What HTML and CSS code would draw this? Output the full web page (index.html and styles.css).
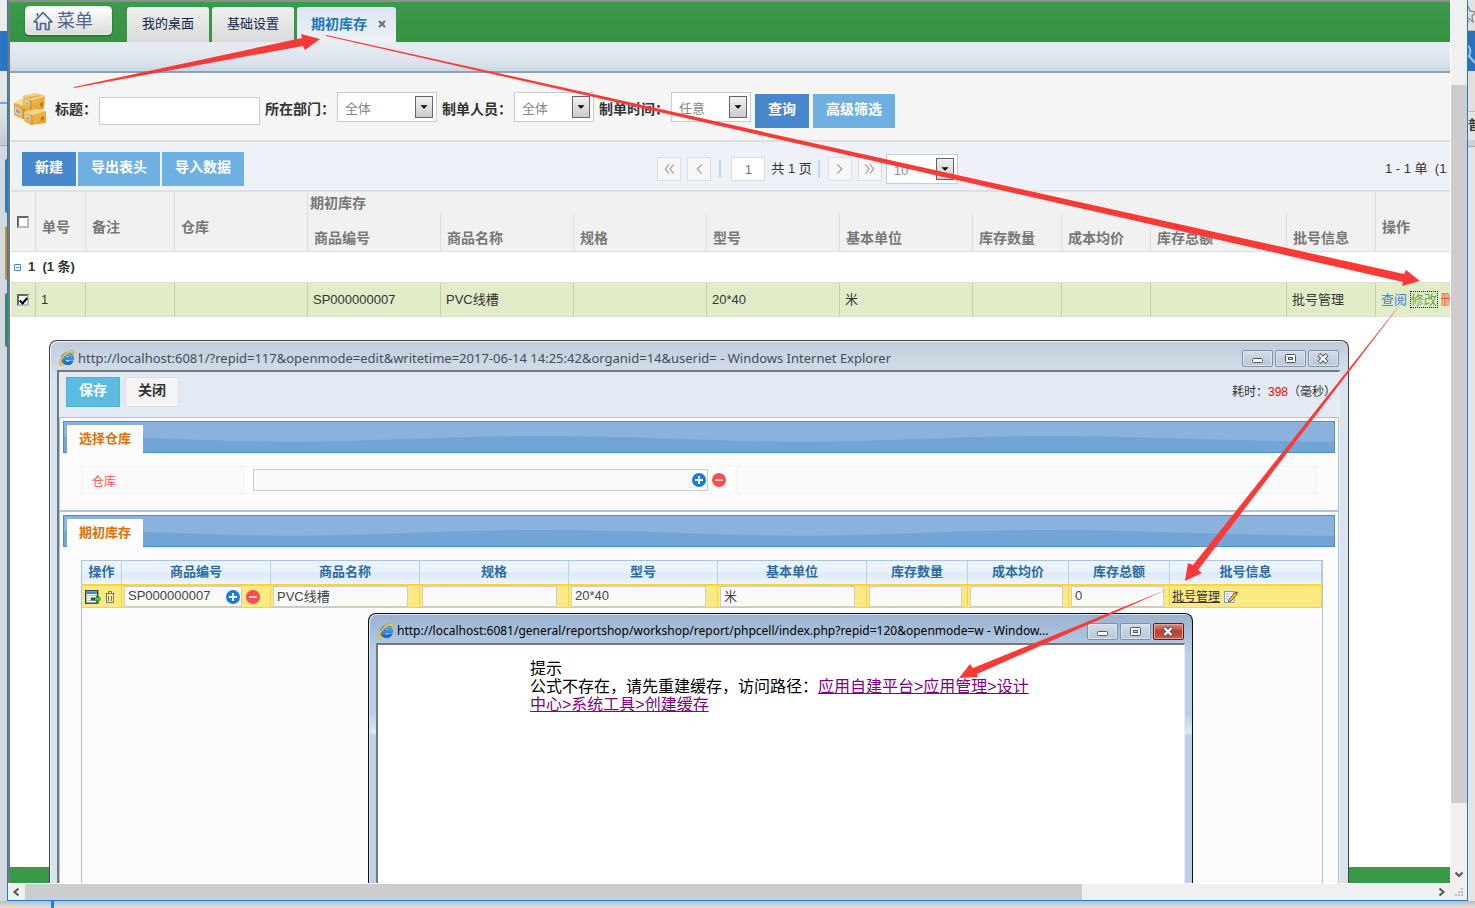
FILE: index.html
```html
<!DOCTYPE html>
<html lang="zh-CN">
<head>
<meta charset="utf-8">
<title>期初库存</title>
<link rel="stylesheet" href="styles.css">
</head>
<body>
<svg class="defs" width="0" height="0" aria-hidden="true">
  <defs>
    <linearGradient id="ieg" x1="0" y1="0" x2="0" y2="1"><stop offset="0" stop-color="#4cc6ff"/><stop offset="1" stop-color="#0a62c4"/></linearGradient>
    <linearGradient id="boxf" x1="0" y1="0" x2="1" y2="1"><stop offset="0" stop-color="#f0c468"/><stop offset="1" stop-color="#e39f2c"/></linearGradient>
    <symbol id="ie" viewBox="0 0 16 16">
      <path d="M14.600 9.600H6.200c.2 1.500 1.100 2.300 2.500 2.300.9 0 1.600-.3 2-1h3.500c-.8 2.600-2.900 3.900-5.600 3.900-3.600 0-6.200-2.400-6.200-6 0-3.600 2.600-6.200 6.200-6.200 3.900 0 6.200 2.600 6 7zM10.900 7.300C10.700 6.100 9.900 5.500 8.600 5.500S6.500 6.100 6.200 7.300z" fill="url(#ieg)" stroke="#0a58ad" stroke-width=".5"/>
      <path d="M13.900 4.500C14.600 2.600 14.500 1 12.600 1.100 8.500 1.300 1.500 8.300.9 13c-.2 2.300 1.700 2.200 3.600 1" fill="none" stroke="#c98a12" stroke-width="2"/>
      <path d="M13.900 4.500C14.600 2.600 14.500 1 12.600 1.100 8.500 1.300 1.500 8.300.9 13c-.2 2.300 1.700 2.200 3.600 1" fill="none" stroke="#ffd94a" stroke-width="1.100"/>
    </symbol>
    <symbol id="plus" viewBox="0 0 14 14"><circle cx="7" cy="7" r="7" fill="#1c7be0"/><path d="M7 3v8M3 7h8" stroke="#fff" stroke-width="1.800"/></symbol>
    <symbol id="minus" viewBox="0 0 14 14"><circle cx="7" cy="7" r="7" fill="#fd4d4d"/><path d="M3 7h8" stroke="#fff" stroke-width="1.500"/></symbol>
    <symbol id="wave" viewBox="0 0 1272 32" preserveAspectRatio="none"><path d="M0 16C80 15 150 21 227 21S390 15 482 15s170 6 255 6 165-6 255-6 190 6 280 6V32H0z" fill="#72a4d6"/></symbol>
    <symbol id="drop" viewBox="0 0 18 22"><path d="M5 9h8L9 13z" fill="#000"/></symbol>
    <symbol id="w-min" viewBox="0 0 31 17"><rect x="10.500" y="8.500" width="10" height="4" rx="1" fill="#fff" stroke="#4d5868"/></symbol>
    <symbol id="w-max" viewBox="0 0 31 17"><rect x="10.500" y="4.500" width="10" height="8" rx="1" fill="#fff" stroke="#4d5868"/><rect x="13.500" y="7.500" width="4" height="2" fill="#cbd6e2" stroke="#4d5868"/></symbol>
    <symbol id="w-close" viewBox="0 0 31 17"><path d="M11 4.500l8 8M19 4.500l-8 8" stroke="#4d5868" stroke-width="4.400"/><path d="M11.500 5l7 7M18.500 5l-7 7" stroke="#fff" stroke-width="2.400"/></symbol>
  </defs>
</svg>
<div class="desk">
  <div class="edge edge-left" aria-hidden="true">
    <i class="e1"></i><i class="e2"></i><i class="e3"></i><i class="e4"></i><i class="e5"></i><i class="c1"></i><i class="c2"></i><i class="c3"></i>
  </div>
  <div class="window">
    <div class="view">
      <header class="topbar">
        <button class="menu" type="button">
          <svg width="20" height="20" viewBox="0 0 20 20" fill="none" stroke="#4a6892" stroke-width="1.700"><path d="M1 11 10 1.500 19 11h-3v7.500h-3.500v-6h-5v6H4V11z" stroke-linejoin="round"/><path d="M4.500 5.500V2"/></svg>
          <span>菜单</span>
        </button>
        <nav class="tabs">
          <button class="tab" type="button">我的桌面</button>
          <button class="tab" type="button">基础设置</button>
          <button class="tab active" type="button">期初库存<svg width="8" height="8" viewBox="0 0 8 8"><path d="M1 1l6 6M7 1 1 7" stroke="#6b7078" stroke-width="2"/></svg></button>
        </nav>
      </header>
      <div class="band"></div>
      <form class="filter">
        <svg class="boxes" width="34" height="34" viewBox="0 0 34 34">
          <path d="M1 11 9 7l10 4v14l-7 3L1 23z" fill="#e8ac40"/><path d="M1 11 9 7l9 3-7 4z" fill="#f7dc9a"/><path d="M11 14v13" stroke="#b97412"/>
          <path d="M10 4 22 1l10 3-1 13-13 2-8-3z" fill="url(#boxf)"/><path d="M10 4 23 1l9 4-14 3z" fill="#f6d58c"/><path d="M18 8v11" stroke="#c98a2c"/><path d="M13 5l13-2 3 1-13 3z" fill="#e6b04c"/>
          <path d="M11 20l10-2 12 1v12l-15 2-7-4z" fill="url(#boxf)"/><path d="M11 20 23 17l10 2-14 4z" fill="#f6d58c"/><path d="M19 23v10" stroke="#c98a2c"/>
          <path d="M2 15l6 3v6l-6-3zM12 8l4 1v5l-4-1zM12 23l5 2v4l-5-2z" fill="#d8d4c4"/><path d="M3 17l4 2v3l-4-2zM13 10l2 1v2l-2-1zM13 25l3 1v2l-3-1z" fill="#8fa3b5"/><path d="M27 11l3-1v4l-3 1zM28 25l3-1v4l-3 1z" fill="#c67d14"/>
        </svg>
        <label for="f-title">标题<span>：</span></label><input id="f-title" class="title-in" type="text">
        <label for="f-dept">所在部门<span>：</span></label><span class="sel wide"><select id="f-dept"><option>全体</option></select><svg><use href="#drop"/></svg></span>
        <label for="f-user">制单人员<span>：</span></label><span class="sel"><select id="f-user"><option>全体</option></select><svg><use href="#drop"/></svg></span>
        <label for="f-time">制单时间<span>：</span></label><span class="sel"><select id="f-time"><option>任意</option></select><svg><use href="#drop"/></svg></span>
        <button class="btn dark" type="button">查询</button><button class="btn" type="button">高级筛选</button>
      </form>
      <div class="toolbar">
        <div class="actions"><button class="btn dark" type="button">新建</button><button class="btn" type="button">导出表头</button><button class="btn" type="button">导入数据</button></div>
        <div class="pager">
          <button type="button" aria-label="首页"><svg viewBox="0 0 24 24"><path d="M12 7 8 12l4 5M17 7l-4 5 4 5"/></svg></button>
          <button type="button" aria-label="上一页"><svg viewBox="0 0 24 24"><path d="M15 7l-5 5 5 5"/></svg></button>
          <i></i><input type="text" value="1" aria-label="页码"><span>共 1 页</span><i class="near"></i>
          <button type="button" aria-label="下一页"><svg viewBox="0 0 24 24"><path d="M9 7l5 5-5 5"/></svg></button>
          <button type="button" aria-label="末页"><svg viewBox="0 0 24 24"><path d="M7 7l4 5-4 5M12 7l4 5-4 5"/></svg></button>
          <span class="sel size"><select aria-label="每页条数"><option>10</option></select><svg><use href="#drop"/></svg></span>
        </div>
        <div class="count">1 - 1 单&nbsp; (1</div>
      </div>
      <table class="list">
        <colgroup><col class="w25"><col class="w50"><col class="w89"><col class="w133"><col class="w133"><col class="w133"><col class="w133"><col class="w133"><col class="w133"><col class="w89"><col class="w89"><col class="w136"><col class="w89"><col></colgroup>
        <thead>
          <tr class="h1"><th rowspan="2" class="ck"><input type="checkbox" aria-label="全选"></th><th rowspan="2">单号</th><th rowspan="2">备注</th><th rowspan="2">仓库</th><th colspan="9" class="grp">期初库存</th><th rowspan="2">操作</th></tr>
          <tr class="h2"><th>商品编号</th><th>商品名称</th><th>规格</th><th>型号</th><th>基本单位</th><th>库存数量</th><th>成本均价</th><th>库存总额</th><th>批号信息</th></tr>
        </thead>
        <tbody>
          <tr class="group"><td colspan="14"><span><svg width="7" height="7" viewBox="0 0 7 7"><path d="M.5.5h6v6h-6zM2 3.500h3" fill="none" stroke="#3c8fd0"/></svg>1&nbsp; (1 条)</span></td></tr>
          <tr class="row"><td class="ck"><input type="checkbox" checked aria-label="选择第 1 行"></td><td>1</td><td></td><td></td><td>SP000000007</td><td>PVC线槽</td><td></td><td>20*40</td><td>米</td><td></td><td></td><td></td><td>批号管理</td><td class="ops"><a href="#" class="view-link">查阅</a> <a href="#" class="edit-link">修改</a> <a href="#" class="del-link">删</a></td></tr>
        </tbody>
      </table>
      <footer class="foot"></footer>

      <section class="popup edit">
        <div class="caption"><svg class="ie"><use href="#ie"/></svg><span>http://localhost:6081/?repid=117&amp;openmode=edit&amp;writetime=2017-06-14 14:25:42&amp;organid=14&amp;userid= - Windows Internet Explorer</span>
          <div class="wbtns"><button type="button" aria-label="最小化"><svg><use href="#w-min"/></svg></button><button type="button" aria-label="最大化"><svg><use href="#w-max"/></svg></button><button type="button" aria-label="关闭窗口"><svg><use href="#w-close"/></svg></button></div></div>
        <div class="body">
          <div class="cmds"><button class="save" type="button">保存</button><button class="shut" type="button">关闭</button><p>耗时：<b>398</b>（毫秒）</p></div>
          <div class="panel">
            <div class="ribbon"><svg class="wave" aria-hidden="true"><use href="#wave"/></svg><h2>选择仓库</h2></div>
            <div class="field"><label for="wh">仓库</label><div class="entry"><input id="wh" type="text"><button class="round inside" type="button" aria-label="添加"><svg><use href="#plus"/></svg></button><button class="round" type="button" aria-label="清除"><svg><use href="#minus"/></svg></button></div></div>
          </div>
          <div class="panel second">
            <div class="ribbon"><svg class="wave" aria-hidden="true"><use href="#wave"/></svg><h2>期初库存</h2></div>
            <div class="sheet">
              <table>
                <colgroup><col class="w40"><col class="w149"><col class="w149"><col class="w149"><col class="w149"><col class="w149"><col class="w101"><col class="w101"><col class="w101"><col></colgroup>
                <thead><tr><th>操作</th><th>商品编号</th><th>商品名称</th><th>规格</th><th>型号</th><th>基本单位</th><th>库存数量</th><th>成本均价</th><th>库存总额</th><th>批号信息</th></tr></thead>
                <tbody><tr>
                  <td><div class="cell">
                    <svg width="16" height="14" viewBox="0 0 16 14"><rect x=".7" y=".7" width="12" height="12.500" fill="#fff" stroke="#33414f" stroke-width="1.400"/><rect x="1.500" y="1.500" width="10.500" height="2.500" fill="#2f8fd8"/><path d="M2 5.500h10M2 8h6M2 10.500h10" stroke="#b3bec8"/><path d="M6 9h5M12.500 6v6.500M9.500 9h6" stroke="#186a28" stroke-width="2.800"/><path d="M12.500 7v4.500M10 9h5" stroke="#5fd257" stroke-width="1.300"/></svg>
                    <svg width="10" height="12" viewBox="0 0 10 12" fill="none" stroke="#777"><path d="M.5 2.500h9M3.500 2.500v-2h3v2M1.500 3v8.500h7V3M3.500 5v5M6.500 5v5"/></svg></div></td>
                  <td><div class="cell"><input class="code" type="text" value="SP000000007" aria-label="商品编号"><button class="round inside" type="button" aria-label="选择商品"><svg><use href="#plus"/></svg></button><button class="round" type="button" aria-label="清除商品"><svg><use href="#minus"/></svg></button></div></td>
                  <td><input type="text" value="PVC线槽" aria-label="商品名称"></td><td><input type="text" aria-label="规格"></td><td><input type="text" value="20*40" aria-label="型号"></td><td><input type="text" value="米" aria-label="基本单位"></td>
                  <td><input class="num" type="text" aria-label="库存数量"></td><td><input class="num" type="text" aria-label="成本均价"></td><td><input class="num" type="text" value="0" aria-label="库存总额"></td>
                  <td><div class="cell"><a href="#">批号管理</a><svg width="14" height="13" viewBox="0 0 14 13"><rect x=".5" y="1.500" width="9.500" height="11" fill="#f3f6ff" stroke="#8795d8"/><path d="M2 4h4M2 6.500h3M2 9h2" stroke="#a9b4dc"/><path d="M5 9.500 11 2.500l2 1.500-6 7-2.500.8z" fill="#ffd23c" stroke="#403000" stroke-width=".8"/><path d="M11 2.500l1-1.500 2 1.500-1 1.500z" fill="#e22"/></svg></div></td>
                </tr></tbody>
              </table>
            </div>
          </div>
        </div>
      </section>

      <section class="popup notice">
        <div class="caption"><svg class="ie"><use href="#ie"/></svg><span>http://localhost:6081/general/reportshop/workshop/report/phpcell/index.php?repid=120&amp;openmode=w - Window...</span>
          <div class="wbtns"><button type="button" aria-label="最小化"><svg><use href="#w-min"/></svg></button><button type="button" aria-label="最大化"><svg><use href="#w-max"/></svg></button><button class="red" type="button" aria-label="关闭窗口"><svg><use href="#w-close"/></svg></button></div></div>
        <div class="body"><div class="msg">提示<br>公式不存在，请先重建缓存，访问路径：<a href="#">应用自建平台&gt;应用管理&gt;设计中心&gt;系统工具&gt;创建缓存</a></div></div>
      </section>
    </div>
    <div class="vbar" aria-hidden="true"><i class="thumb"></i><svg width="16" height="17" viewBox="0 0 16 17"><path d="M4.500 6.500 8 10l3.500-3.500" fill="none" stroke="#555" stroke-width="2"/></svg></div>
    <div class="hbar" aria-hidden="true"><svg width="17" height="16" viewBox="0 0 17 16"><path d="M10.500 4.500 6.500 8l4 3.500" fill="none" stroke="#555" stroke-width="2"/></svg><i class="thumb"></i><svg class="last" width="17" height="16" viewBox="0 0 17 16"><path d="M6.500 4.500l4 3.500-4 3.500" fill="none" stroke="#555" stroke-width="2"/></svg></div>
    <div class="grip" aria-hidden="true"><svg width="16" height="16" viewBox="0 0 16 16"><path d="M11 5h2v2h-2zM8 8h2v2H8zM11 8h2v2h-2zM5 11h2v2H5zM8 11h2v2H8zM11 11h2v2h-2z" fill="#bdbdbd"/></svg></div>
  </div>
  <div class="edge edge-right">
    <i class="r1"><svg width="7" height="18" viewBox="0 0 7 18"><path d="M0 1l2 5 6 1M0 17l1-1M0 13l4 3 1 1-1-6 4-4" fill="none" stroke="#888" stroke-width="1.300"/></svg></i>
    <i class="r2"><svg width="7" height="20" viewBox="0 0 7 20"><path d="M0 2c3 2 3 8 0 11M1 12l6 7" fill="none" stroke="#9cc4ee" stroke-width="2"/></svg></i>
    <i class="r3"></i><b>普通</b><i class="r5"></i>
  </div>
  <div class="edge-bottom" aria-hidden="true"></div>
</div>
<svg class="arrows" width="1475" height="908" viewBox="0 0 1475 908" aria-hidden="true" fill="#fb3a38">
  <path d="M74 87 302 38 301 34 320 39 305 50 303 46 74 88z"/>
  <path d="M326 35 1404 274 1406 270 1420 281 1402 286 1403 282 326 36z"/>
  <path d="M1406 297 1193 565 1188 563 1185 581 1202 573 1198 570z"/>
  <path d="M1168 589 973 668 970 664 959 678 978 677 977 674z"/>
</svg>
</body>
</html>
```
FILE: styles.css
```css
* { box-sizing: border-box; }
body { margin: 0; font: 13px/18px "Liberation Sans", "Noto Sans CJK SC", sans-serif; color: #333; overflow: hidden; }
button, input, select { font: inherit; color: inherit; margin: 0; padding: 0; }
button { cursor: pointer; }
svg { display: block; flex: none; }
.defs { position: absolute; }

.desk { display: grid; grid-template: 1fr 7px / 7px 1fr 7px; height: 100vh; background: #dedede; }
.edge { display: flex; flex-direction: column; min-width: 0; overflow: hidden; }
.edge i { display: block; }
.edge-left { background: #d5d9dd; align-items: flex-end; }
.edge-left i { width: 100%; }
.e1 { height: 31px; background: #ececec; }
.e2 { height: 40px; background: #2d74c4; }
.e3 { height: 31px; background: #e6e6e4; }
.e4 { height: 2px; background: #68a6e8; }
.e5 { height: 42px; background: linear-gradient(#e4e6e8, #c3cad0); border-bottom: 1px solid #aaa; }
.edge-left .c1, .edge-left .c2, .edge-left .c3 { width: 2px; height: 54px; margin-top: 13px; border-radius: 2px 0 0 2px; }
.c1 { background: #1b80d4; }
.c2 { background: #c8921c; }
.c3 { background: #2f9550; }
.edge-right { background: #e4e4e4; }
.r1 { height: 31px; padding-top: 5px; background: #e2e2e2; border-bottom: 1px solid #bbb; }
.r2 { height: 40px; padding-top: 13px; background: #2b70bc; }
.r3 { height: 41px; background: #e2e0de; border-bottom: 1px solid #bbb; }
.edge-right b { height: 28px; padding-top: 4px; font-size: 13px; white-space: nowrap; color: #333; }
.r5 { height: 7px; background: #c9d2d8; border-bottom: 1px solid #aaa; }
.edge-bottom { grid-column: 1 / -1; background: linear-gradient(90deg, transparent 51px, #1b80d4 51px, #1b80d4 54px, transparent 54px), linear-gradient(#bdbdbd, #e2e2e2); }

.window { display: grid; grid-template: 1fr 17px / 1fr 17px; min-width: 0; min-height: 0; border: solid #1a80d3; border-width: 0 1px 1px; background: #f0f0f0; }
.view { position: relative; display: flex; flex-direction: column; min-width: 0; overflow: hidden; background: #fff; border-left: 2px solid #777; border-top: 2px solid #88928a; }
.thumb { background: #cdcdcd; }
.vbar { display: flex; flex-direction: column; justify-content: flex-end; border-left: 1px solid #fff; }
.vbar .thumb { height: 81.3%; margin-bottom: 63px; }
.hbar { display: flex; border-top: 1px solid #fff; }
.hbar .thumb { width: 73.3%; }
.hbar .last { margin-left: auto; }

.topbar { display: flex; align-items: flex-end; height: 40px; padding-left: 15px; background: linear-gradient(#3a9b4a, #369343); }
.menu { display: flex; align-items: center; gap: 4px; height: 29px; margin-bottom: 7px; padding: 0 18px 0 7px; border: 1px solid #e9e9e9; border-radius: 4px; background: linear-gradient(#fff, #dcdcdc); box-shadow: 0 1px 2px #1c5c28; color: #4a6892; font-size: 18px; }
.tabs { display: flex; gap: 3px; margin-left: 15px; }
.tab { height: 35px; padding: 0 15px 2px; border: 0; border-radius: 3px 3px 0 0; background: linear-gradient(#efefef, #dadada); color: #11264d; font-size: 13px; }
.tab.active { display: flex; align-items: center; gap: 11px; padding: 0 10px 2px 14px; background: linear-gradient(#dce5f0, #eef1f6); color: #2477b6; font-size: 14px; font-weight: bold; }
.band { flex: none; height: 31px; background: linear-gradient(#e9edf2, #dbe3ed 70%, #ccd7e3); border-bottom: 2px solid #8ba1b8; }

.filter { display: flex; align-items: center; flex: none; height: 68px; padding: 8px 0 0 3px; background: #f5f5f5; border-bottom: 1px solid #ddd; white-space: nowrap; }
.filter .boxes { margin-bottom: 4px; }
.filter label { margin: 0 2px 4px 5px; font-size: 14px; font-weight: bold; }
.filter label span { font-family: "Noto Sans CJK TC", sans-serif; }
.filter .boxes + label { margin-left: 8px; }
.title-in { width: 161px; height: 28px; padding: 0 6px; border: 1px solid #ccc; background: #fff; }
.sel { position: relative; flex: none; width: 80px; height: 30px; margin-bottom: 8px; }
.sel.wide { width: 100px; }
.sel select { appearance: none; width: 100%; height: 100%; padding: 4px 7px 0; border: 1px solid #ccc; border-radius: 0; background: #fff; color: #888; }
.sel svg { position: absolute; right: 4px; top: 4px; width: 18px; height: 22px; border: 1px solid #666; background: linear-gradient(#f2f2f2, #ccc); pointer-events: none; }
.btn { height: 34px; padding: 0 13px 4px; border: 0; background: #6eb0e2; color: #fff; font-size: 14px; font-weight: bold; }
.btn.dark { background: #4788cc; }
.filter .btn { margin-left: 4px; }

.toolbar { display: flex; align-items: center; justify-content: space-between; flex: none; height: 51px; margin-left: 1px; padding: 6px 0 0 11px; background: #eef1f7; border-top: 1px solid #ddd; border-bottom: 2px solid #e0e0e0; }
.actions { display: flex; gap: 2px; }
.pager { display: flex; align-items: center; gap: 6px; padding-right: 14px; }
.pager button { width: 24px; height: 24px; border: 1px solid #ddd; background: #f7f7f7; }
.pager button svg { width: 22px; height: 22px; fill: none; stroke: #aaa; stroke-width: 1.500; }
.pager i { width: 2px; height: 18px; margin: 0 4px 0 2px; background: #c9d4e0; }
.pager i.near { margin: 0 2px 0 0; }
.pager input { width: 34px; height: 24px; border: 1px solid #ddd; background: #fff; color: #777; text-align: center; }
.pager .size { width: 72px; margin: 0 0 0 -2px; }
.count { width: 65px; white-space: nowrap; }

.list { flex: none; width: calc(100% - 1px); margin-left: 1px; table-layout: fixed; border-spacing: 0; }
.w25 { width: 25px; } .w50 { width: 50px; } .w89 { width: 89px; } .w133 { width: 133px; } .w136 { width: 136px; }
.w40 { width: 40px; } .w149 { width: 149px; } .w101 { width: 101px; }
.list th { padding: 0 6px; border-right: 1px solid #ddd; border-bottom: 1px solid #ddd; background: #f1f1f1; color: #777; font-size: 14px; text-align: left; white-space: nowrap; }
.list th[rowspan] { padding-top: 10px; }
.list .h1 th.grp { height: 21px; padding: 0 2px; border-bottom: 0; }
.list .h2 th { height: 39px; padding-top: 12px; }
.list th.ck, .list td.ck { padding: 0; text-align: center; }
.ck input { appearance: none; display: block; width: 12px; height: 12px; margin: 0 auto; border: 2px inset #bbb; background: #fff; }
.row .ck input:checked { background: linear-gradient(#fff, #fff); position: relative; }
.row .ck input:checked::after { content: ""; position: absolute; left: 2px; top: 0; width: 3px; height: 6px; border: solid #000; border-width: 0 2px 2px 0; transform: rotate(42deg); }
.group td { height: 31px; padding: 0 3px; border-bottom: 1px solid #ddd; font-weight: bold; }
.group span { display: flex; align-items: center; gap: 7px; }
.row td { height: 34px; padding: 0 5px; background: #e1edc9; border-right: 1px solid #c5d0a8; border-bottom: 1px solid #ddd; white-space: nowrap; }
.row .ops, .list .h1 th:last-child { border-right: 0; }
.ops a { text-decoration: none; }
.view-link { color: #4088cc; }
.edit-link { color: #69a74c; outline: 1px dotted #222; }
.del-link { color: #e8532f; }
.foot { flex: none; height: 16px; margin-top: auto; background: #389947; }

.popup { position: absolute; bottom: 0; display: flex; flex-direction: column; border: 1px solid #444; border-bottom: 0; border-radius: 8px 8px 0 0; padding: 0 7px; font-size: 12px; }
.edit { left: 39px; right: 101px; top: 338px; padding-right: 8px; background: linear-gradient(#c0ccd9, #d8e3f0 40px); box-shadow: inset 1px 1px #eef3f8; }
.notice { left: 358px; right: 257px; top: 611px; border-color: #111; background: linear-gradient(#9ab2ce, #b9d0ea 40px, #b9d0ea 100px, #dce8f5 118px, #bcd1e6 122px); box-shadow: inset 1px 1px #d5e2f0; }
.caption { display: flex; align-items: center; flex: none; height: 29px; padding: 5px 1px 0 2px; color: #444c58; font: 13px/16px "Noto Sans", "Noto Sans CJK SC", sans-serif; }
.caption span { flex: 1; min-width: 0; white-space: nowrap; margin-left: 3px; }
.notice .caption { color: #000; font-size: 12px; }
.ie { width: 16px; height: 16px; }
.wbtns { display: flex; gap: 2px; margin-left: 7px; }
.wbtns button { width: 31px; height: 17px; border: 1px solid #8292a6; border-radius: 2px; background: linear-gradient(#d3dde8, #b8c6d6); box-shadow: inset 0 0 0 1px #dbe5ef; }
.wbtns svg { width: 31px; height: 17px; margin: -1px; }
.wbtns .red { background: linear-gradient(#d9907f, #b9412b 50%, #c8604a); border-color: #5d1d14; box-shadow: inset 0 0 0 1px #e0a79a; }
.popup .body { display: flex; flex-direction: column; flex: 1; min-height: 0; border: 2px solid #777; border-width: 2px 1px 0 2px; border-right-color: #eee; background: #fcfcfc; overflow: hidden; }
.notice .body { background: #fff; color: #000; }
.msg { width: 505px; margin: 15px 0 0 152px; font-size: 16px; line-height: 18px; }
.msg a { color: #800080; }

.cmds { display: flex; flex: none; gap: 5px; height: 45px; padding: 5px 3px 0 7px; background: #e3eaf4; }
.cmds button { width: 54px; height: 30px; padding-bottom: 4px; border: 1px solid #ddd; background: #f4f4f4; font-size: 14px; font-weight: bold; }
.cmds .save { border-color: #48b5dc; background: #5bbce0; color: #fff; }
.cmds p { margin: 6px 0 0 auto; font-size: 12px; }
.cmds b { color: #f00; font-weight: normal; }
.panel { flex: none; height: 95px; padding: 3px 3px 0; border: 1px solid #a9c5de; border-bottom-width: 2px; }
.panel.second { display: flex; flex-direction: column; flex: 1; height: auto; border-top: 0; border-bottom: 0; }
.ribbon { position: relative; display: flex; flex: none; height: 32px; padding: 3px 0 0 3px; border: 1px solid #4390d6; background: #8ab2dd; }
.ribbon .wave { position: absolute; left: 0; top: 0; width: 100%; height: 100%; }
.ribbon h2 { position: relative; margin: 0; height: 29px; padding: 5px 12px; background: #fcfcfc; color: #e07000; font-size: 13px; line-height: 18px; }
.field { display: flex; height: 28px; margin: 13px 18px 0; border: 1px solid #f2f2f2; background: #fafafa; }
.field label { width: 161px; padding: 6px 10px; color: #f55; line-height: 18px; }
.entry { display: flex; align-items: center; width: 494px; padding-left: 9px; border: solid #f2f2f2; border-width: 0 1px; background: #fff; }
.entry input { width: 455px; height: 22px; border: 1px solid #ccc; background: #fafafa; }
.round { flex: none; width: 14px; height: 14px; margin-left: 7px; border: 0; background: none; }
.round svg { width: 14px; height: 14px; }
.round.inside { margin-left: -16px; }
.entry .inside { margin-right: -1px; }
.sheet { flex: 1; margin: 13px 12px 0 18px; border: 1px solid #a9c5de; border-bottom: 0; }
.sheet table { width: 100%; table-layout: fixed; border-spacing: 0; }
.sheet th { height: 23px; padding: 0 0 2px; border-right: 1px solid #b9d0e4; background: linear-gradient(#eaf3fc 45%, #dceafa 55%, #eef5fd); color: #2a6ca0; font-size: 13px; }
.sheet td { height: 24px; padding: 0 2px; border: solid #fad534; border-width: 2px 1px 1px 0; background: #fbe984; }
.sheet td:first-child { padding-left: 3px; }
.sheet input { display: block; width: 135px; height: 21px; padding: 0 4px 2px 3px; border: 1px solid #ccc; background: #fafafa; color: #444; font-size: 13px; }
.sheet input.num { width: 93px; }
.sheet input.code { width: 118px; }
.cell { display: flex; align-items: center; gap: 4px; }
.cell .round { margin-left: 2px; }
.cell .inside { margin-left: -20px; }
.cell a { color: #333; font-size: 12px; }

.arrows { position: absolute; left: 0; top: 0; pointer-events: none; }
```
